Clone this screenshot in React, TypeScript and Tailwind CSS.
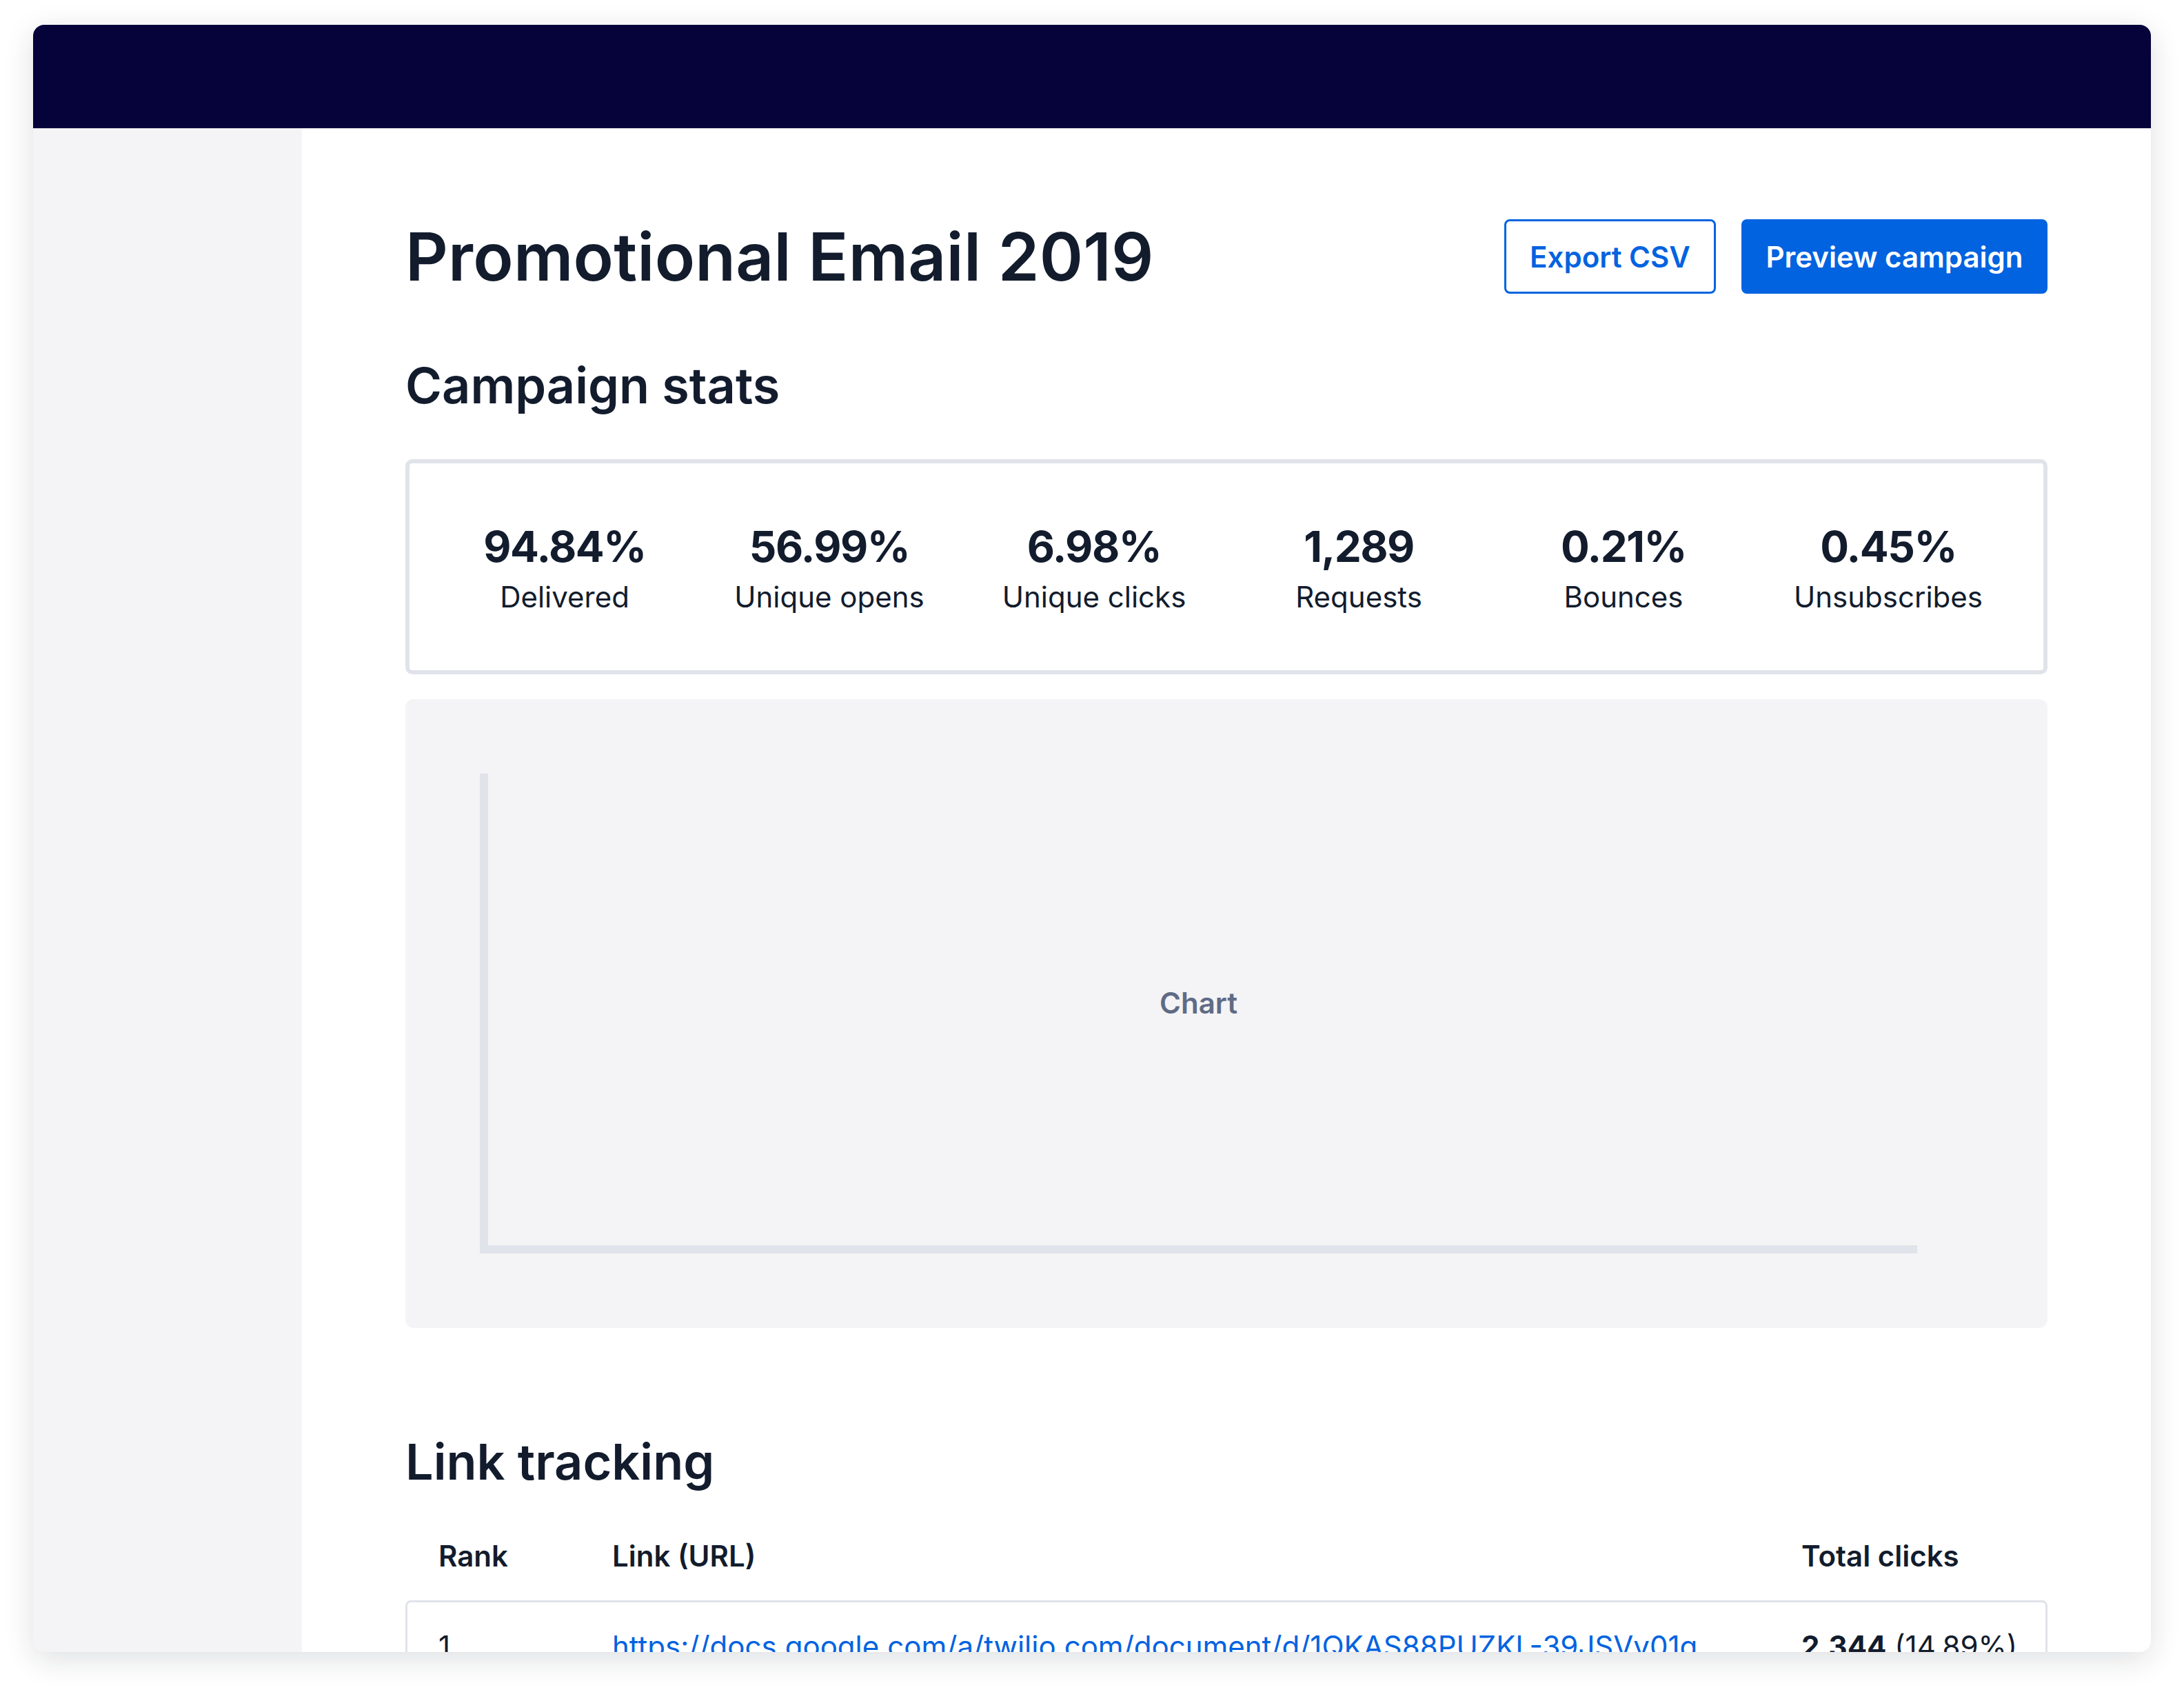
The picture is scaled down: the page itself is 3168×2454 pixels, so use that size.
import React from 'react';

const stats = [
  { value: '94.84%', label: 'Delivered' },
  { value: '56.99%', label: 'Unique opens' },
  { value: '6.98%', label: 'Unique clicks' },
  { value: '1,289', label: 'Requests' },
  { value: '0.21%', label: 'Bounces' },
  { value: '0.45%', label: 'Unsubscribes' },
];

const links = [
  {
    rank: 1,
    url: 'https://docs.google.com/a/twilio.com/document/d/1QKAS88PUZKL-39JSVv01g',
    clicks: '2,344',
    share: '(14.89%)',
  },
  {
    rank: 2,
    url: 'https://www.twilio.com/docs/sendgrid',
    clicks: '1,102',
    share: '(7.00%)',
  },
];

const StatItem = ({ value, label }: { value: string; label: string }) => (
  <div className="flex flex-col items-center">
    <div className="text-[62px] leading-[78px] font-bold tracking-[-1.5px]">{value}</div>
    <div className="mt-[10px] text-[42px] leading-[48px]">{label}</div>
  </div>
);

export default function App() {
  return (
    <div
      className="w-[3168px] h-[2454px] bg-white pt-[36px] pl-[48px] text-[#121c2d]"
      style={{ fontFamily: 'Inter, "Noto Sans", "Liberation Sans", sans-serif' }}
    >
      <div className="w-[3072px] h-[2360px] rounded-[16px] overflow-hidden flex flex-col bg-white shadow-[0_10px_44px_rgba(18,28,45,0.14)]">
        {/* top bar */}
        <div className="h-[150px] shrink-0 bg-[#06033a]" />

        <div className="flex flex-1 min-h-0">
          {/* sidebar */}
          <div className="w-[390px] shrink-0 bg-[#f4f4f6]" />

          {/* main */}
          <main className="flex-1 min-w-0 px-[150px] pt-[128px] overflow-hidden">
            <div className="flex items-center justify-between">
              <h1 className="text-[96px] leading-[116px] font-semibold tracking-[0.2px]">
                Promotional Email 2019
              </h1>
              <div className="flex items-center gap-[37px]">
                <button className="w-[307px] h-[108px] rounded-[8px] border-[3px] border-[#0263e0] bg-white text-[#0263e0] text-[42px] font-semibold">
                  Export CSV
                </button>
                <button className="w-[444px] h-[108px] rounded-[8px] bg-[#0263e0] text-white text-[42px] font-semibold">
                  Preview campaign
                </button>
              </div>
            </div>

            <h2 className="mt-[86px] text-[72px] leading-[86px] font-semibold">Campaign stats</h2>

            <div className="mt-[64px] rounded-[10px] border-[6px] border-[#e1e3ea] px-[33px] py-[82px] grid grid-cols-6">
              {stats.map((s) => (
                <StatItem key={s.label} value={s.value} label={s.label} />
              ))}
            </div>

            {/* chart placeholder */}
            <div className="mt-[36px] h-[912px] rounded-[12px] bg-[#f4f4f6] pt-[108px] pl-[108px] pr-[189px] pb-[108px] flex">
              <div className="flex-1 border-l-[12px] border-b-[12px] border-[#e1e3ea] flex items-center justify-center">
                <span className="text-[42px] font-semibold text-[#606b85] -mt-[20px] -ml-[12px]">Chart</span>
              </div>
            </div>

            <h2 className="mt-[151px] text-[72px] leading-[86px] font-semibold">Link tracking</h2>

            {/* link table */}
            <div className="mt-[30px] flex pl-[48px] py-[40px] text-[42px] leading-[48px] font-semibold">
              <div className="w-[252px]">Rank</div>
              <div className="flex-1">Link (URL)</div>
              <div className="w-[357px] whitespace-nowrap">Total clicks</div>
            </div>
            <div className="rounded-[8px] border-[3px] border-[#e1e3ea]">
              {links.map((l, i) => (
                <div
                  key={l.rank}
                  className={`flex pl-[45px] py-[40px] text-[42px] leading-[48px] ${i > 0 ? 'border-t-[3px] border-[#e1e3ea]' : ''}`}
                >
                  <div className="w-[252px]">{l.rank}</div>
                  <div className="flex-1 min-w-0 whitespace-nowrap">
                    <a href="#" className="text-[#0263e0] underline">
                      {l.url}
                    </a>
                  </div>
                  <div className="w-[354px] whitespace-nowrap">
                    <span className="font-bold">{l.clicks}</span> {l.share}
                  </div>
                </div>
              ))}
            </div>
          </main>
        </div>
      </div>
    </div>
  );
}
